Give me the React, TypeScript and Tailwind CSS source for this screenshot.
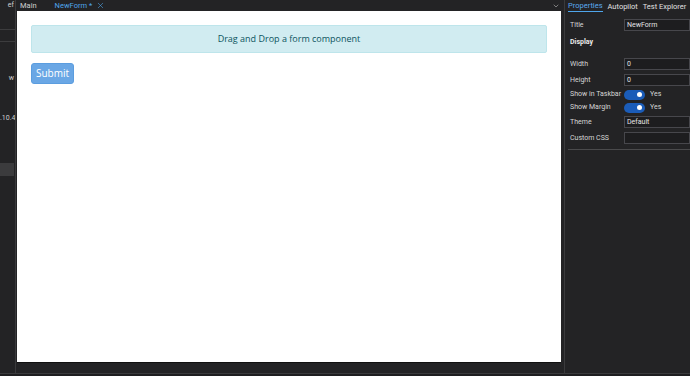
import { X, ChevronDown } from 'lucide-react'

function Toggle({ label }: { label: string }) {
  return (
    <div className="flex items-center h-[13px]">
      <span className="w-[54px] shrink-0 whitespace-nowrap">{label}</span>
      <div className="flex items-center gap-[5px]">
        <div className="w-[21px] h-[10px] rounded-full bg-[#1b5cb8] flex items-center justify-end pr-[3px]">
          <div className="w-[5px] h-[5px] rounded-full bg-white" />
        </div>
        <span>Yes</span>
      </div>
    </div>
  )
}

function InputRow({ label, value }: { label: string; value: string }) {
  return (
    <div className="flex items-center h-[16px]">
      <span className="w-[54px] shrink-0 whitespace-nowrap">{label}</span>
      <div className="flex-1 h-[12px] border border-[#47474c] bg-[#1d1d1f] pl-[2px] flex items-center text-[#e4e4e4]">
        {value}
      </div>
    </div>
  )
}

export default function App() {
  return (
    <div
      className="w-[690px] h-[376px] bg-[#232325] flex flex-col overflow-hidden text-[#d4d4d4]"
      style={{ fontFamily: 'Roboto, "Open Sans", sans-serif' }}
    >
      <div className="flex h-[373px]">
        {/* left panel (cut off) */}
        <div className="w-[16px] shrink-0 border-r border-[#3a3a3c] flex flex-col text-[7px] text-[#cfcfcf] overflow-hidden">
          <div className="h-[11px] leading-[11px] text-right pr-[1px]">ef</div>
          <div className="mt-[18px] border-t border-[#3c3c3e]" />
          <div className="mt-[11px] border-t border-[#3c3c3e]" />
          <div className="mt-[31px] text-right pr-[1px] leading-[10px]">w</div>
          <div className="mt-[30px] text-right leading-[10px]">.10.4</div>
          <div className="mt-[40px] h-[13px] w-[14px] bg-[#3b3b3d]" />
        </div>

        {/* center */}
        <div className="flex-1 flex flex-col">
          <div className="h-[11px] flex items-center text-[7.5px] leading-none">
            <span className="ml-[4px] text-[#d0d0d0]">Main</span>
            <span className="ml-[18px] text-[#4fa6ec]">NewForm *</span>
            <X className="ml-[4px] w-[9px] h-[9px] text-[#4fa6ec]" strokeWidth={1.5} />
            <ChevronDown className="ml-auto mr-[4px] w-[8px] h-[8px] text-[#aaaaaa]" strokeWidth={2} />
          </div>
          <div className="ml-[1px] w-[544px] h-[352px] bg-white border-b border-[#111] px-[14px] pt-[14px]"
            style={{ fontFamily: '"Open Sans", Lato, sans-serif' }}>
            <div className="h-[28px] bg-[#d1ecf1] border border-[#bee5eb] rounded-[2px] flex items-center justify-center text-[9px] text-[#0c5460]">
              Drag and Drop a form component
            </div>
            <button className="mt-[10px] h-[21px] w-[43px] rounded-[3px] bg-[#6aa7e5] border border-[#5b9ddf] text-white text-[10px] flex items-center justify-center">
              Submit
            </button>
          </div>
        </div>

        {/* right panel */}
        <div className="w-[126px] shrink-0 border-l border-[#3a3a3c] text-[7px] text-[#d6d6d6]">
          <div className="h-[12px] flex items-end text-[7.5px] leading-none whitespace-nowrap">
            <span className="ml-[3px] pb-[2px] border-b-[1px] border-[#4fa6ec] text-[#5aaaf0]">Properties</span>
            <span className="ml-[5px] pb-[2px] text-[#e0e0e0]">Autopilot</span>
            <span className="ml-[5px] pb-[2px] text-[#e0e0e0]">Test Explorer</span>
          </div>
          <div className="pl-[5px] pt-[5px] pr-0">
            <InputRow label="Title" value="NewForm" />
            <div className="h-[19px] flex items-center font-bold text-[#ececec]">Display</div>
            <div className="h-[4px]" />
            <InputRow label="Width" value="0" />
            <InputRow label="Height" value="0" />
            <Toggle label="Show in Taskbar" />
            <Toggle label="Show Margin" />
            <InputRow label="Theme" value="Default" />
            <InputRow label="Custom CSS" value="" />
            <div className="mt-[3px] -ml-[2px] border-t border-[#4a4a4c]" />
          </div>
        </div>
      </div>
      <div className="flex-1 border-t border-[#3a3a3c] bg-[#1e1e20]" />
    </div>
  )
}
